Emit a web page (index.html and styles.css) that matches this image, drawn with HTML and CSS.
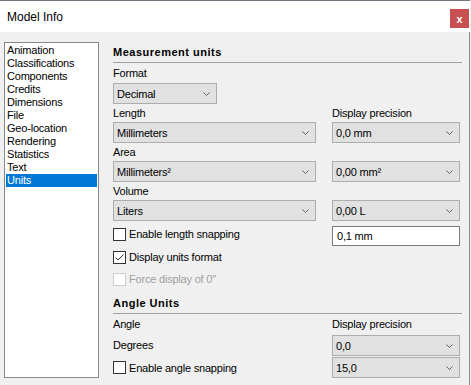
FILE: index.html
```html
<!DOCTYPE html>
<html lang="en">
<head>
  <meta charset="UTF-8">
  <meta name="viewport" content="width=device-width, initial-scale=1.0">
  <title>Model Info</title>
  <link rel="stylesheet" href="styles.css">
</head>
<body>
  <div class="window">
    <div class="titlebar">
      <span class="title">Model Info</span>
      <span class="close">x</span>
    </div>

    <div class="content">
      <ul class="pages">
        <li>Animation</li>
        <li>Classifications</li>
        <li>Components</li>
        <li>Credits</li>
        <li>Dimensions</li>
        <li>File</li>
        <li>Geo-location</li>
        <li>Rendering</li>
        <li>Statistics</li>
        <li>Text</li>
        <li class="active">Units</li>
      </ul>

      <div class="settings">
        <h2 class="section">Measurement units</h2>
        <div class="format-label">Format</div>
        <div class="select narrow">
          <span>Decimal</span>
          <svg class="chevron" width="7" height="4" viewBox="0 0 7 4"><polyline points="0.5,0.5 3.5,3.5 6.5,0.5"/></svg>
        </div>

        <div class="units-grid">
          <div class="field-label">Length</div>
          <div class="field-label">Display precision</div>
          <div class="select">
            <span>Millimeters</span>
            <svg class="chevron" width="7" height="4" viewBox="0 0 7 4"><polyline points="0.5,0.5 3.5,3.5 6.5,0.5"/></svg>
          </div>
          <div class="select">
            <span>0,0 mm</span>
            <svg class="chevron" width="7" height="4" viewBox="0 0 7 4"><polyline points="0.5,0.5 3.5,3.5 6.5,0.5"/></svg>
          </div>

          <div class="field-label">Area</div>
          <div></div>
          <div class="select">
            <span>Millimeters²</span>
            <svg class="chevron" width="7" height="4" viewBox="0 0 7 4"><polyline points="0.5,0.5 3.5,3.5 6.5,0.5"/></svg>
          </div>
          <div class="select">
            <span>0,00 mm²</span>
            <svg class="chevron" width="7" height="4" viewBox="0 0 7 4"><polyline points="0.5,0.5 3.5,3.5 6.5,0.5"/></svg>
          </div>

          <div class="field-label">Volume</div>
          <div></div>
          <div class="select">
            <span>Liters</span>
            <svg class="chevron" width="7" height="4" viewBox="0 0 7 4"><polyline points="0.5,0.5 3.5,3.5 6.5,0.5"/></svg>
          </div>
          <div class="select">
            <span>0,00 L</span>
            <svg class="chevron" width="7" height="4" viewBox="0 0 7 4"><polyline points="0.5,0.5 3.5,3.5 6.5,0.5"/></svg>
          </div>

          <label class="check first">
            <span class="box"></span>
            <span>Enable length snapping</span>
          </label>
          <div class="text-input">0,1 mm</div>

          <label class="check">
            <span class="box"><svg width="11" height="11" viewBox="0 0 11 11"><polyline points="1.5,5.5 4,8 9.5,2.5"/></svg></span>
            <span>Display units format</span>
          </label>
          <div></div>

          <label class="check disabled">
            <span class="box"></span>
            <span>Force display of 0"</span>
          </label>
          <div></div>
        </div>

        <h2 class="section angle">Angle Units</h2>
        <div class="angle-grid">
          <div class="row-label">Angle</div>
          <div class="row-label">Display precision</div>
          <div class="row-label">Degrees</div>
          <div class="select">
            <span>0,0</span>
            <svg class="chevron" width="7" height="4" viewBox="0 0 7 4"><polyline points="0.5,0.5 3.5,3.5 6.5,0.5"/></svg>
          </div>
          <label class="check last">
            <span class="box"></span>
            <span>Enable angle snapping</span>
          </label>
          <div class="select last">
            <span>15,0</span>
            <svg class="chevron" width="7" height="4" viewBox="0 0 7 4"><polyline points="0.5,0.5 3.5,3.5 6.5,0.5"/></svg>
          </div>
        </div>
      </div>
    </div>
  </div>
</body>
</html>
```

FILE: styles.css
```css
body {
  margin: 0;
  background: #f0f0f0;
  font-family: "Liberation Sans", Arial, sans-serif;
  font-size: 11px;
  letter-spacing: -0.2px;
  color: #000;
  overflow: hidden;
}

.window {
  width: 470px;
  height: 385px;
  box-sizing: border-box;
  border-top: 1px solid #6e7680;
  display: flex;
  flex-direction: column;
}

/* title bar */
.titlebar {
  height: 31px;
  flex-shrink: 0;
  background: #fff;
  display: flex;
  align-items: center;
  justify-content: space-between;
  padding: 0 1px 0 7px;
}

.title {
  font-size: 12px;
  letter-spacing: 0;
}

.close {
  align-self: flex-start;
  margin-top: 8px;
  width: 19px;
  height: 19px;
  background: #c75050;
  color: #fff;
  font-weight: bold;
  font-size: 11px;
  letter-spacing: 0;
  display: flex;
  align-items: center;
  justify-content: center;
}

.content {
  flex: 1;
  display: flex;
  gap: 14px;
  padding: 10px 0 0 4px;
  border-right: 1px solid #8a8a8a;
}

/* page list */
.pages {
  list-style: none;
  margin: 0;
  padding: 1px;
  box-sizing: border-box;
  width: 95px;
  height: 336px;
  background: #fff;
  border: 1px solid #828790;
}

.pages li {
  height: 13px;
  line-height: 13px;
  padding-left: 1px;
  white-space: nowrap;
}

.pages li.active {
  background: #0078d7;
  color: #fff;
}

/* settings */
.settings {
  width: 349px;
}

.section {
  margin: 0;
  font-size: 11px;
  font-weight: bold;
  letter-spacing: 0.5px;
  height: 20px;
  line-height: 20px;
  border-bottom: 1px solid #a0a0a0;
}

.section.angle {
  padding-top: 4px;
  height: 19px;
  line-height: 19px;
}

.format-label {
  line-height: 20px;
}

.field-label {
  line-height: 18px;
}

.row-label {
  line-height: 21px;
}

.select {
  box-sizing: border-box;
  height: 21px;
  background: #e1e1e1;
  border: 1px solid #adadad;
  display: flex;
  align-items: center;
  justify-content: space-between;
  padding: 0 6px 0 3px;
  white-space: nowrap;
}

.select.narrow {
  width: 104px;
}

.chevron {
  fill: none;
  stroke: #606060;
  stroke-width: 1;
}

.units-grid,
.angle-grid {
  display: grid;
  grid-template-columns: 203px 128px;
  column-gap: 16px;
}

.text-input {
  margin-top: 5px;
  height: 20px;
  box-sizing: border-box;
  border: 1px solid #7a7a7a;
  background: #fff;
  padding-left: 4px;
  line-height: 18px;
}

/* checkboxes */
.check {
  display: flex;
  align-items: center;
  gap: 3px;
  height: 22px;
  white-space: nowrap;
}

.check.first {
  margin-top: 2px;
}

.check.last,
.select.last {
  margin-top: 1px;
  height: 21px;
}

.box {
  width: 13px;
  height: 13px;
  box-sizing: border-box;
  border: 1px solid #333;
  background: #fff;
  flex-shrink: 0;
}

.box svg {
  display: block;
  fill: none;
  stroke: #333;
  stroke-width: 1;
}

.check.disabled {
  color: #a0a0a0;
}

.check.disabled .box {
  border-color: #cccccc;
}
```
